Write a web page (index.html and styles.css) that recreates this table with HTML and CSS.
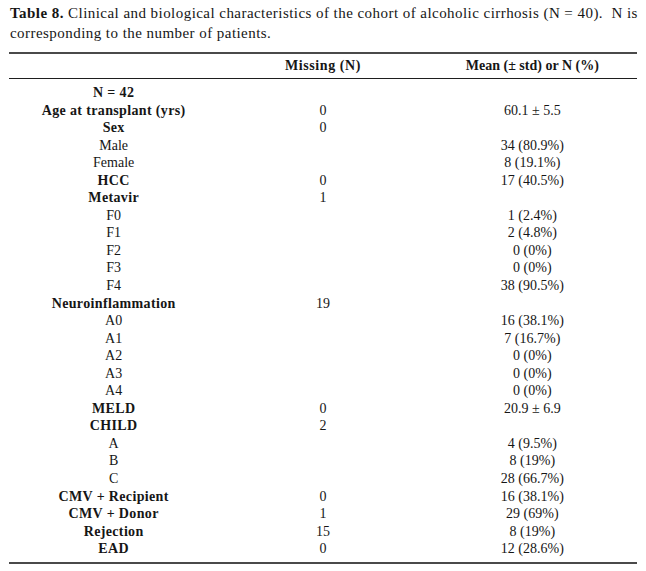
FILE: index.html
```html
<!DOCTYPE html>
<html>
<head>
<meta charset="utf-8">
<link rel="stylesheet" href="styles.css">
</head>
<body>
<p class="caption"><b>Table 8.</b> Clinical and biological characteristics of the cohort of alcoholic cirrhosis (N = 40).&nbsp; N is<br>corresponding to the number of patients.</p>
<table class="data">
  <thead>
    <tr><th></th><th>Missing (N)</th><th>Mean (± std) or N (%)</th></tr>
  </thead>
  <tbody>
    <tr class="first"><td class="lbl b">N = 42</td><td></td><td></td></tr>
    <tr><td class="lbl b">Age at transplant (yrs)</td><td>0</td><td>60.1 ± 5.5</td></tr>
    <tr><td class="lbl b">Sex</td><td>0</td><td></td></tr>
    <tr><td class="lbl">Male</td><td></td><td>34 (80.9%)</td></tr>
    <tr><td class="lbl">Female</td><td></td><td>8 (19.1%)</td></tr>
    <tr><td class="lbl b">HCC</td><td>0</td><td>17 (40.5%)</td></tr>
    <tr><td class="lbl b">Metavir</td><td>1</td><td></td></tr>
    <tr><td class="lbl">F0</td><td></td><td>1 (2.4%)</td></tr>
    <tr><td class="lbl">F1</td><td></td><td>2 (4.8%)</td></tr>
    <tr><td class="lbl">F2</td><td></td><td>0 (0%)</td></tr>
    <tr><td class="lbl">F3</td><td></td><td>0 (0%)</td></tr>
    <tr><td class="lbl">F4</td><td></td><td>38 (90.5%)</td></tr>
    <tr><td class="lbl b">Neuroinflammation</td><td>19</td><td></td></tr>
    <tr><td class="lbl">A0</td><td></td><td>16 (38.1%)</td></tr>
    <tr><td class="lbl">A1</td><td></td><td>7 (16.7%)</td></tr>
    <tr><td class="lbl">A2</td><td></td><td>0 (0%)</td></tr>
    <tr><td class="lbl">A3</td><td></td><td>0 (0%)</td></tr>
    <tr><td class="lbl">A4</td><td></td><td>0 (0%)</td></tr>
    <tr><td class="lbl b">MELD</td><td>0</td><td>20.9 ± 6.9</td></tr>
    <tr><td class="lbl b">CHILD</td><td>2</td><td></td></tr>
    <tr><td class="lbl">A</td><td></td><td>4 (9.5%)</td></tr>
    <tr><td class="lbl">B</td><td></td><td>8 (19%)</td></tr>
    <tr><td class="lbl">C</td><td></td><td>28 (66.7%)</td></tr>
    <tr><td class="lbl b">CMV + Recipient</td><td>0</td><td>16 (38.1%)</td></tr>
    <tr><td class="lbl b">CMV + Donor</td><td>1</td><td>29 (69%)</td></tr>
    <tr><td class="lbl b">Rejection</td><td>15</td><td>8 (19%)</td></tr>
    <tr class="last"><td class="lbl b">EAD</td><td>0</td><td>12 (28.6%)</td></tr>
  </tbody>
</table>
</body>
</html>
```
FILE: styles.css
```css
html, body {
  margin: 0;
  padding: 0;
  background: #ffffff;
}
body {
  font-family: "Liberation Serif", "Times New Roman", serif;
  color: #161616;
}
.caption {
  margin: 0;
  padding: 3px 0 0 10px;
  font-size: 15px;
  letter-spacing: 0.45px;
  line-height: 20px;
  white-space: nowrap;
}
.data {
  margin: 9px 0 0 9px;
  width: 628px;
  border-collapse: collapse;
  table-layout: fixed;
  border-top: 2px solid #4a4a4a;
  border-bottom: 2px solid #4a4a4a;
  font-size: 14px;
}
.data th {
  height: 24px;
  padding: 0;
  font-weight: bold;
  text-align: center;
  border-bottom: 1px solid #1e1e1e;
  vertical-align: middle;
}
.data th:nth-child(2) {
  letter-spacing: 0.6px;
}
.data td {
  padding: 0;
  height: 17.55px;
  line-height: 17.55px;
  text-align: center;
  vertical-align: middle;
}
.data td.b {
  font-weight: bold;
  letter-spacing: 0.35px;
}
.data tr.first td {
  padding-top: 5px;
}
.data tr.last td {
  padding-bottom: 4px;
}
```
